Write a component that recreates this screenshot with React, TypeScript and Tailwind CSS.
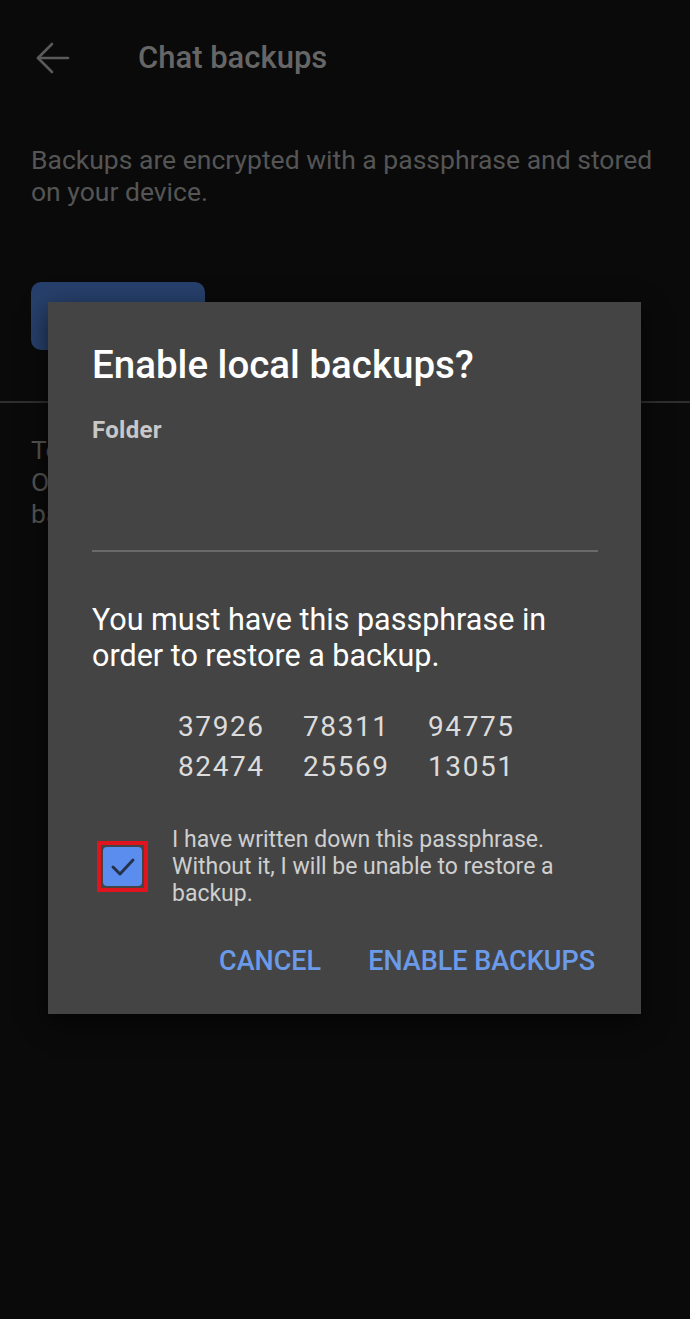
import React from "react";

export default function App() {
  const words = ["37926", "78311", "94775", "82474", "25569", "13051"];

  return (
    <div
      className="relative w-[690px] h-[1319px] bg-[#0a0a0a] overflow-hidden"
      style={{ fontFamily: "Roboto, 'Noto Sans', sans-serif" }}
    >
      {/* Screen behind the dialog (dimmed) */}
      <div className="flex items-center h-[116px] pl-[35px]">
        <svg width="36" height="32" viewBox="0 0 36 32" fill="none" stroke="#5a5a5a" strokeWidth="2.6" strokeLinecap="round" strokeLinejoin="round">
          <path d="M33 16H3" />
          <path d="M17 2L3 16l14 14" />
        </svg>
        <span className="ml-[67px] text-[31px] font-medium text-[#666666]">Chat backups</span>
      </div>

      <p className="mt-[28px] px-[31px] text-[26.5px] leading-[32px] text-[#555555]">
        Backups are encrypted with a passphrase and stored on your device.
      </p>

      <div className="mt-[74px] ml-[31px] w-[174px] h-[68px] rounded-[10px] bg-[#27406b]" />

      <div className="mt-[51px] h-[1.5px] w-full bg-[#2e2e2e]" />

      <p className="mt-[31px] px-[31px] text-[26.5px] leading-[32px] text-[#555555]">
        To restore a backup, install a new copy.
        <br />
        Open the app and tap "Restore backup".
        <br />
        backup file.
      </p>

      {/* Dialog */}
      <div className="absolute left-[48px] top-[302px] w-[593px] h-[712px] bg-[#444444] shadow-[0_8px_24px_rgba(0,0,0,0.6)] px-[44px]">
        <h2 className="mt-[41px] text-[38.5px] leading-[44px] font-medium text-white">Enable local backups?</h2>

        <div className="mt-[29px] text-[24px] leading-[28px] font-bold text-[#c8c8c8] tracking-[0.3px]">Folder</div>
        <div className="mt-[106px] h-[2px] w-[506px] bg-[#6a6a6a]" />

        <p className="mt-[50px] text-[30.5px] leading-[36px] text-white">
          You must have this passphrase in
          <br />
          order to restore a backup.
        </p>

        <div className="mt-[36px] ml-[86px] grid grid-cols-[125px_125px_100px] gap-y-[6px] text-[28px] leading-[34px] text-[#dcdcdc] tracking-[1.6px]">
          {words.map((w) => (
            <span key={w}>{w}</span>
          ))}
        </div>

        <div className="mt-[42px] ml-[5px] flex items-center gap-[24px]">
          <div className="w-[51px] h-[51px] shrink-0 border-[4px] border-[#e0141e] flex items-center justify-center">
            <div className="w-[39px] h-[39px] rounded-[4px] bg-[#5b8def] flex items-center justify-center">
              <svg width="28" height="22" viewBox="0 0 28 22" fill="none" stroke="#25324a" strokeWidth="3" strokeLinecap="round" strokeLinejoin="round">
                <path d="M4 11l7 7L24 4" />
              </svg>
            </div>
          </div>
          <p className="text-[23px] leading-[27px] text-[#cfcfcf]">
            I have written down this passphrase.
            <br />
            Without it, I will be unable to restore a
            <br />
            backup.
          </p>
        </div>

        <div className="mt-[38px] flex justify-end gap-[47px] pr-[2px] text-[27px] leading-[32px] font-medium text-[#6b9be8]">
          <span>CANCEL</span>
          <span>ENABLE BACKUPS</span>
        </div>
      </div>
    </div>
  );
}
